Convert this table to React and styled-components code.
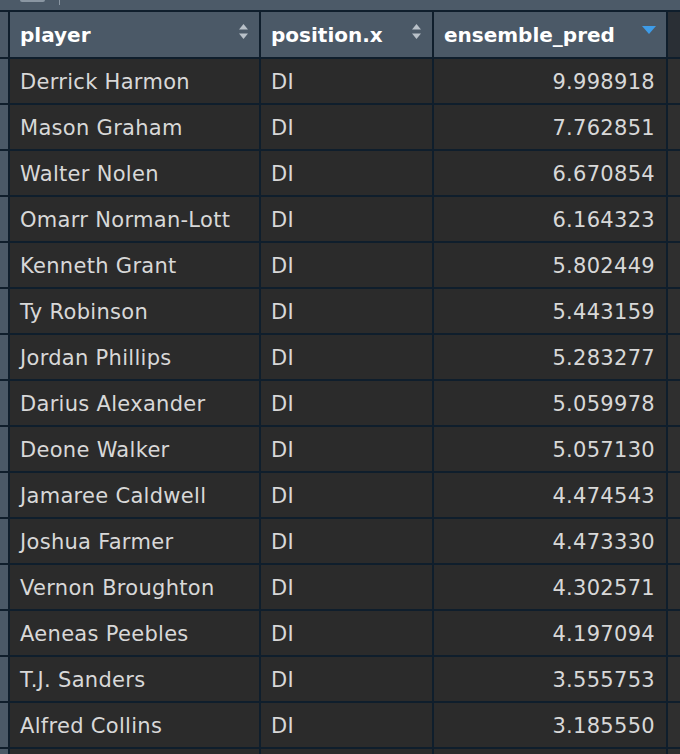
import React from 'react'
import styled, { createGlobalStyle } from 'styled-components'

const GlobalStyle = createGlobalStyle`
  html, body { margin: 0; padding: 0; background: #2e2e2e; }
  body { width: 680px; height: 754px; overflow: hidden; }
`

const rows = [
  ['Derrick Harmon', 'DI', '9.998918'],
  ['Mason Graham', 'DI', '7.762851'],
  ['Walter Nolen', 'DI', '6.670854'],
  ['Omarr Norman-Lott', 'DI', '6.164323'],
  ['Kenneth Grant', 'DI', '5.802449'],
  ['Ty Robinson', 'DI', '5.443159'],
  ['Jordan Phillips', 'DI', '5.283277'],
  ['Darius Alexander', 'DI', '5.059978'],
  ['Deone Walker', 'DI', '5.057130'],
  ['Jamaree Caldwell', 'DI', '4.474543'],
  ['Joshua Farmer', 'DI', '4.473330'],
  ['Vernon Broughton', 'DI', '4.302571'],
  ['Aeneas Peebles', 'DI', '4.197094'],
  ['T.J. Sanders', 'DI', '3.555753'],
  ['Alfred Collins', 'DI', '3.185550'],
  ['', '', ''],
]

const Page = styled.div`
  width: 680px;
  height: 754px;
  overflow: hidden;
  background: #2e2e2e;
  font-family: "DejaVu Sans", Verdana, sans-serif;
`

const Toolbar = styled.div`
  height: 10px;
  background: #4c5a68;
  position: relative;
  &::before {
    content: '';
    position: absolute;
    left: 20px;
    top: 0;
    width: 25px;
    height: 2px;
    border-radius: 0 0 3px 3px;
    background: #8a96a2;
  }
  &::after {
    content: '';
    position: absolute;
    left: 59px;
    top: 0;
    width: 1px;
    height: 5px;
    background: #8a96a2;
  }
`

const Grid = styled.div`
  display: grid;
  grid-template-columns: 8px 249px 171px 232px 1fr;
  grid-auto-rows: 44px;
  grid-template-rows: 45px;
  gap: 2px;
  padding-top: 2px;
  background: #0f1e2c;
`

const Gutter = styled.div`
  background: #4b5967;
`

const HeadCell = styled.div`
  background: #4b5967;
  color: #ffffff;
  font-weight: bold;
  font-size: 20px;
  display: flex;
  align-items: center;
  padding: 0 10px;
  position: relative;
`

const Cell = styled.div`
  background: #2b2b2b;
  color: #d8d8d8;
  font-size: 21px;
  letter-spacing: 0.3px;
  display: flex;
  align-items: center;
  justify-content: ${p => (p.$right ? 'flex-end' : 'flex-start')};
  padding: 2px ${p => (p.$right ? '11px' : '10px')} 0;
  white-space: nowrap;
`

const Filler = styled.div`
  background: ${p => (p.$head ? '#2a2f35' : '#2f2f2f')};
`

const SortIcon = styled.svg`
  position: absolute;
  right: 10px;
  top: ${p => (p.$active ? '14px' : '11px')};
`

const Both = () => (
  <SortIcon width="11" height="17" viewBox="0 0 11 17">
    <path d="M5.5 1 L10 6.5 L1 6.5 Z" fill="#b9c1c9" />
    <path d="M5.5 16 L10 10.5 L1 10.5 Z" fill="#b9c1c9" />
  </SortIcon>
)

const Desc = () => (
  <SortIcon $active width="14" height="8" viewBox="0 0 14 8">
    <path d="M0 0 L14 0 L7 8 Z" fill="#3e9ce8" />
  </SortIcon>
)

export default function App() {
  return (
    <Page>
      <GlobalStyle />
      <Toolbar />
      <Grid>
        <Gutter />
        <HeadCell>player<Both /></HeadCell>
        <HeadCell>position.x<Both /></HeadCell>
        <HeadCell>ensemble_pred<Desc /></HeadCell>
        <Filler $head />
        {rows.map((r, i) => (
          <React.Fragment key={i}>
            <Gutter />
            <Cell>{r[0]}</Cell>
            <Cell>{r[1]}</Cell>
            <Cell $right>{r[2]}</Cell>
            <Filler />
          </React.Fragment>
        ))}
      </Grid>
    </Page>
  )
}
